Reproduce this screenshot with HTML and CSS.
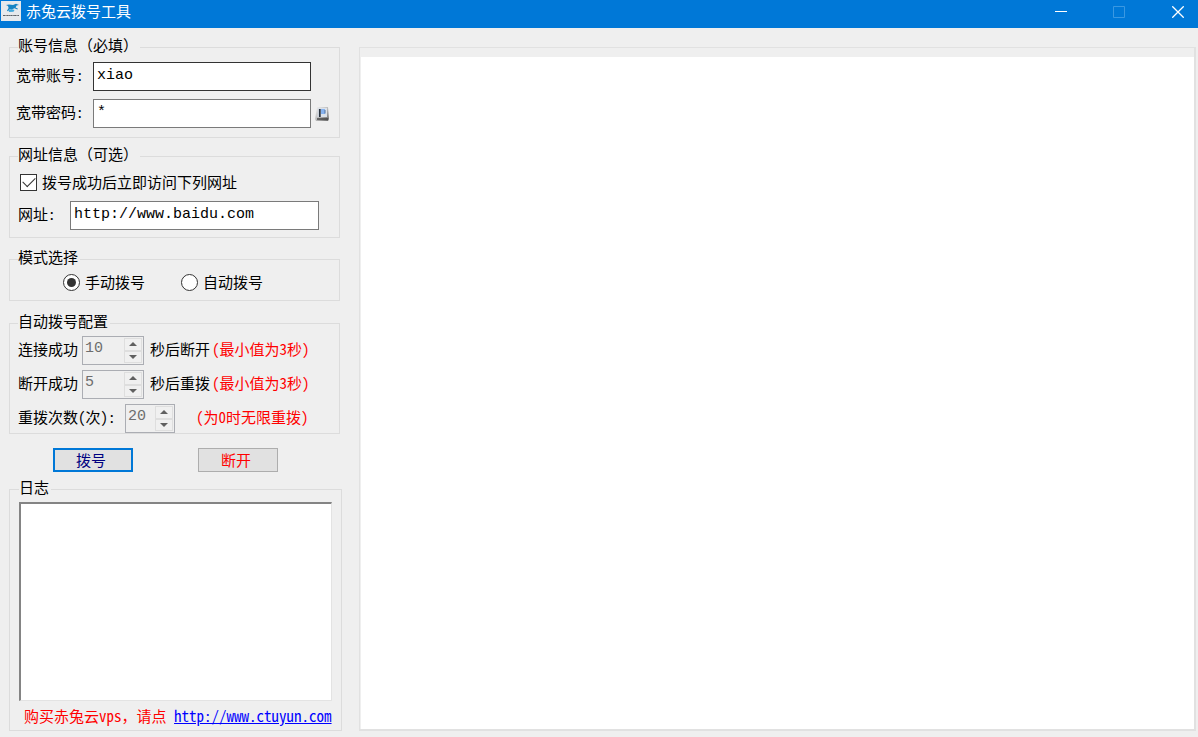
FILE: index.html
```html
<!DOCTYPE html>
<html lang="zh-CN">
<head>
<meta charset="utf-8">
<title>赤兔云拨号工具</title>
<link rel="stylesheet" href="styles.css">
</head>
<body>
<header class="titlebar">
  <svg class="logo" viewBox="0 0 20 20" aria-hidden="true">
    <rect width="20" height="20" fill="#e6e9ec"/>
    <path d="M5 4l3-.6 4 .6 3-1.200 3 1.200-2.400.4-1 2 2.400 1.400-.6.8-3-1.400-1.600.8-3 .2-2 2-.8-.4 1.600-2.800L7 5z" fill="#1684c4"/>
    <path d="M7.500 9l3-1 3 1-1 1.800-4.500.3z" fill="#3fa9de"/>
    <path d="M2 14.500h16" stroke="#5c6268" stroke-width="1.200" stroke-dasharray="2 .4 1 .3"/>
  </svg>
  <h1 class="title">赤兔云拨号工具</h1>
  <div class="window-buttons">
    <button class="window-button" type="button" aria-label="最小化"><svg viewBox="0 0 12 12"><path d="M0 5.500h12"/></svg></button>
    <button class="window-button dim" type="button" aria-label="最大化" disabled><svg viewBox="0 0 12 12"><path d="M.5.5h11v11H.5z"/></svg></button>
    <button class="window-button" type="button" aria-label="关闭"><svg viewBox="0 0 12 12"><path d="M.3.3l11.400 11.400M11.700.3L.3 11.700" stroke-width="1.300"/></svg></button>
  </div>
</header>
<div class="content">
  <form class="sidebar">
    <fieldset class="group account">
      <legend>账号信息（必填）</legend>
      <div class="row">
        <label class="field-label" for="user">宽带账号:</label>
        <input class="text-box focused" id="user" type="text" value="xiao">
      </div>
      <div class="row">
        <label class="field-label" for="pass">宽带密码:</label>
        <input class="text-box" id="pass" type="text" value="*">
        <button class="key-button" type="button" aria-label="显示密码">
          <svg viewBox="0 0 16 16">
            <defs><linearGradient id="key" x1="0" y1="0" x2="1" y2="1"><stop offset="0" stop-color="#f4f4f4"/><stop offset=".5" stop-color="#bcbcbc"/><stop offset="1" stop-color="#666"/></linearGradient></defs>
            <path d="M3 1h11l1 12-1 2H2l-1-2z" fill="url(#key)"/>
            <path d="M4 2h9v9H3.500z" fill="#dce2ea"/>
            <path d="M7 3h4v5H7z" fill="#86b2ee"/>
            <path d="M5.800 3v8" stroke="#29323d" stroke-width="1.800"/>
            <path d="M11 4v3.500" stroke="#52739e"/>
            <path d="M3 13h11" stroke="#3c3c3c" stroke-width="1.300"/>
          </svg>
        </button>
      </div>
    </fieldset>

    <fieldset class="group site">
      <legend>网址信息（可选）</legend>
      <label class="choice"><input class="check" type="checkbox" checked>拨号成功后立即访问下列网址</label>
      <div class="row">
        <label class="url-label" for="url">网址:</label>
        <input class="text-box url-box" id="url" type="text" value="http://www.baidu.com">
      </div>
    </fieldset>

    <fieldset class="group mode">
      <legend>模式选择</legend>
      <div class="choices">
        <label class="choice"><input class="radio" type="radio" name="mode" checked>手动拨号</label>
        <label class="choice"><input class="radio" type="radio" name="mode">自动拨号</label>
      </div>
    </fieldset>

    <fieldset class="group auto">
      <legend>自动拨号配置</legend>
      <div class="row">
        <label for="up">连接成功</label>
        <span class="spinner">
          <input id="up" type="number" value="10" disabled>
          <span class="steps"><button class="step" type="button" aria-label="增加" disabled><i class="up"></i></button><button class="step" type="button" aria-label="减少" disabled><i class="down"></i></button></span>
        </span>
        <span class="unit">秒后断开</span>
        <span class="note">(最小值为3秒)</span>
      </div>
      <div class="row">
        <label for="down">断开成功</label>
        <span class="spinner">
          <input id="down" type="number" value="5" disabled>
          <span class="steps"><button class="step" type="button" aria-label="增加" disabled><i class="up"></i></button><button class="step" type="button" aria-label="减少" disabled><i class="down"></i></button></span>
        </span>
        <span class="unit">秒后重拨</span>
        <span class="note">(最小值为3秒)</span>
      </div>
      <div class="row">
        <label class="count-label" for="count">重拨次数(次):</label>
        <span class="spinner small">
          <input id="count" type="number" value="20" disabled>
          <span class="steps"><button class="step" type="button" aria-label="增加" disabled><i class="up"></i></button><button class="step" type="button" aria-label="减少" disabled><i class="down"></i></button></span>
        </span>
        <span class="note last-note">(为0时无限重拨)</span>
      </div>
    </fieldset>

    <div class="actions">
      <button class="action primary" type="button">拨号</button>
      <button class="action danger" type="button">断开</button>
    </div>

    <fieldset class="group log">
      <legend>日志</legend>
      <textarea class="log-box" aria-label="日志" readonly></textarea>
      <p class="promo">购买赤兔云vps<span class="full">，</span>请点 <a href="http://www.ctuyun.com">http://www.ctuyun.com</a></p>
    </fieldset>
  </form>
  <main class="viewer"></main>
</div>
</body>
</html>
```
FILE: styles.css
```css
* {
  box-sizing: border-box;
}

body {
  display: flex;
  flex-direction: column;
  min-height: 100vh;
  margin: 0;
  background: #efefef;
  color: #000;
  font: 15px/20px "Noto Sans CJK SC", sans-serif;
  font-feature-settings: "hwid";
}

button,
input,
textarea {
  margin: 0;
  padding: 0;
  font: inherit;
}

.titlebar {
  display: flex;
  align-items: flex-start;
  height: 28px;
  padding-left: 1px;
  background: #0078d7;
  color: #fff;
}

.logo {
  width: 20px;
  height: 20px;
  margin-top: 1px;
}

.title {
  margin: 1px 0 0 5px;
  font-size: 15px;
  font-weight: 400;
}

.window-buttons {
  display: flex;
  margin-left: auto;
}

.window-button {
  display: grid;
  place-items: center;
  width: 58px;
  height: 24px;
  border: 0;
  background: none;
}

.window-button:last-child {
  width: 40px;
  margin-left: 10px;
}

.window-button svg {
  width: 12px;
  height: 12px;
  fill: none;
  stroke: #fff;
}

.window-button.dim svg {
  stroke: #3a98e2;
}

.content {
  display: flex;
  flex: 1;
  gap: 17px;
  padding: 9px 2px 6px 9px;
}

.sidebar {
  display: flex;
  flex-direction: column;
  flex: none;
  width: 333px;
}

.group {
  min-width: 0;
  margin: 0 2px 0 0;
  padding: 0 8px;
  border: 1px solid #dcdcdc;
}

.group legend {
  padding: 0 2px 4px 0;
  line-height: 16px;
}

.group legend,
.full {
  font-feature-settings: normal;
}

.row {
  display: flex;
  align-items: center;
}

.row label,
.unit,
.note {
  padding-bottom: 4px;
}

.text-box {
  flex: 1;
  min-width: 0;
  height: 29px;
  padding: 0 3px 2px;
  border: 1px solid #7a7a7a;
  background: #fff;
  color: #000;
  font-family: "Liberation Mono", monospace;
}

.focused {
  border-color: #333;
}

.account {
  padding: 5px 8px 9px;
}

.account .row {
  margin-left: -2px;
}

.account .row + .row {
  margin-top: 8px;
}

.field-label {
  width: 77px;
}

.account .text-box {
  flex: none;
  width: 218px;
}

.key-button {
  display: grid;
  width: 16px;
  height: 16px;
  margin-left: 3px;
  border: 0;
  background: none;
}

.site {
  margin-top: 8px;
  padding: 6px 20px 7px 8px;
}

.site .row {
  margin-top: 9px;
}

.url-label {
  width: 52px;
}

.choice {
  display: flex;
  align-items: center;
  gap: 5px;
}

.check,
.radio {
  appearance: none;
  display: grid;
  place-items: center;
  width: 17px;
  height: 17px;
  border: 1px solid #333;
  background: #fff;
}

.site .choice {
  padding-left: 2px;
}

.check:checked::before {
  content: "";
  width: 11px;
  height: 6px;
  margin-top: -4px;
  border: solid #333;
  border-width: 0 0 1px 1px;
  transform: rotate(-45deg);
}

.radio {
  border-radius: 50%;
}

.radio:checked::before {
  content: "";
  width: 9px;
  height: 9px;
  border-radius: 50%;
  background: #333;
}

.mode {
  margin-top: 11px;
  padding: 3px 8px 8px;
}

.choices {
  display: flex;
  gap: 36px;
  padding-left: 45px;
}

.auto {
  margin-top: 12px;
  padding-top: 3px;
}

.auto .row + .row {
  margin-top: 5px;
}

.spinner {
  display: flex;
  width: 62px;
  height: 29px;
  margin: 0 6px 0 4px;
  padding: 1px;
  border: 1px solid #abadb3;
}

.spinner input {
  appearance: textfield;
  flex: 1;
  min-width: 0;
  padding: 0 0 4px 1px;
  border: 0;
  background: none;
  color: #6d6d6d;
  font-family: "Liberation Mono", monospace;
}

.spinner input::-webkit-inner-spin-button {
  appearance: none;
}

.steps {
  display: grid;
  width: 18px;
}

.step {
  display: grid;
  place-items: center;
  border: 1px solid #dedede;
  background: #f0f0f0;
}

.up,
.down {
  border: 4px solid transparent;
}

.up {
  border-top: 0;
  border-bottom-color: #606060;
}

.down {
  border-bottom: 0;
  border-top-color: #606060;
}

.note {
  margin-left: 2px;
  color: #f00;
}

.count-label {
  width: 103px;
}

.small {
  width: 50px;
}

.last-note {
  margin-left: 15px;
}

.actions {
  display: flex;
  gap: 65px;
  margin: 14px 0 7px 44px;
}

.action {
  width: 80px;
  height: 24px;
  padding-right: 4px;
  border: 1px solid #adadad;
  background: #e1e1e1;
  line-height: 20px;
}

.primary {
  border: 2px solid #0078d7;
  color: #000080;
}

.danger {
  color: #f00;
}

.log {
  display: flex;
  flex: 1;
  flex-direction: column;
  margin-right: 0;
  padding: 3px 9px 4px;
}

.log-box {
  flex: 1;
  border: solid;
  border-width: 2px 1px 1px 2px;
  border-color: #848484 #e3e3e3 #e3e3e3 #848484;
  background: #fff;
  resize: none;
}

.promo {
  margin: 5px 0 0 5px;
  color: #f00;
  white-space: nowrap;
}

.promo a {
  color: #00f;
}

.viewer {
  flex: 1;
  margin-top: 10px;
  padding: 9px 0 0 1px;
  border: 2px solid #e1e1e1;
  border-width: 1px 2px 2px 1px;
  background: #fff content-box;
}
```
